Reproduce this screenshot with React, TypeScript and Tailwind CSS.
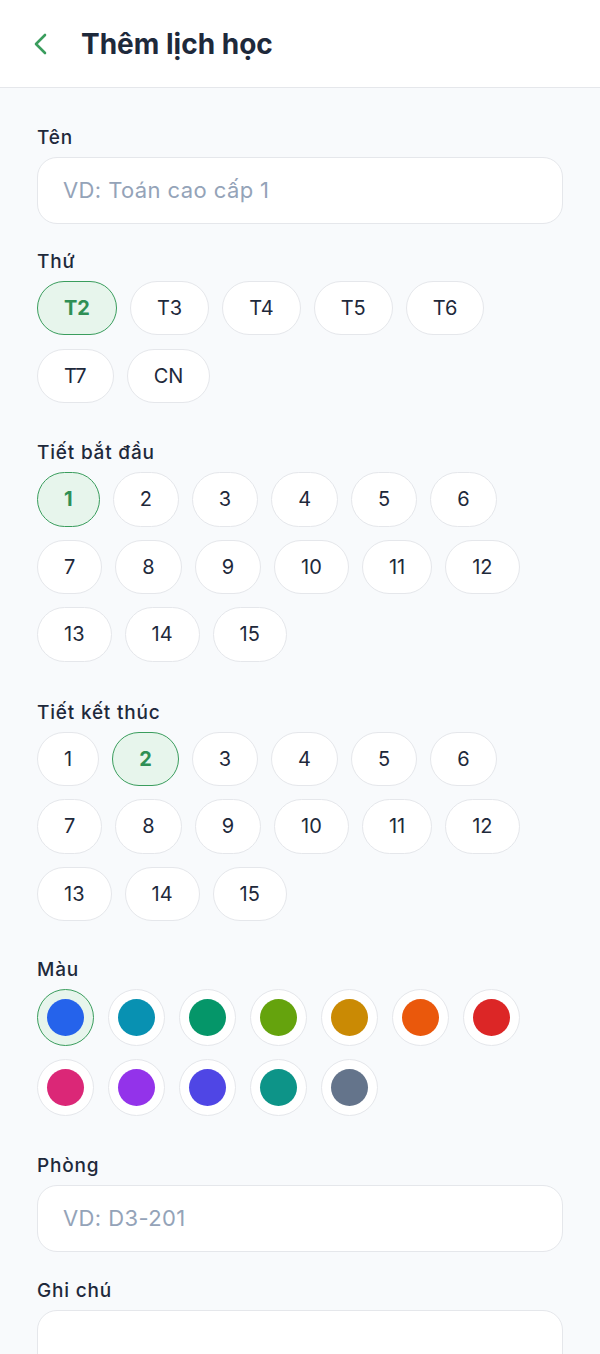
import React from "react";

const days = ["T2", "T3", "T4", "T5", "T6", "T7", "CN"];
const periods = Array.from({ length: 15 }, (_, i) => String(i + 1));
const colors = [
  "#2563eb",
  "#0891b2",
  "#059669",
  "#65a30d",
  "#ca8a04",
  "#ea580c",
  "#dc2626",
  "#db2777",
  "#9333ea",
  "#4f46e5",
  "#0d9488",
  "#64748b",
];

function Chip({ label, selected, tall }: { label: string; selected?: boolean; tall?: boolean }) {
  const h = tall ? "h-[54.5px]" : "h-[54px]";
  return (
    <button
      className={
        selected
          ? `${h} px-[26px] rounded-full border border-[#3a9d5d] bg-[#e7f5ec] text-[20px] font-bold text-[#2f8f55] leading-none`
          : `${h} px-[26px] rounded-full border border-[#e5e7eb] bg-white text-[20px] text-[#1e293b] leading-none`
      }
    >
      {label}
    </button>
  );
}

function Label({ children }: { children: React.ReactNode }) {
  return (
    <div className="text-[19px] leading-[24px] font-medium tracking-[0.8px] text-[#1e293b] mb-[7px]">{children}</div>
  );
}

export default function App() {
  return (
    <div className="min-h-[1354px] bg-[#f8fafc]" style={{ fontFamily: "Inter, 'Noto Sans', sans-serif" }}>
      <div className="h-[88px] bg-white border-b border-[#e5e7eb] flex items-center">
        <div className="w-[81px] flex items-center pl-[33px]">
          <svg width="16" height="22" viewBox="0 0 16 22" fill="none">
            <polyline points="12,2 3,11 12,20" stroke="#3a9d5d" strokeWidth="2.6" strokeLinecap="round" strokeLinejoin="round" />
          </svg>
        </div>
        <h1 className="text-[28px] font-bold text-[#1e293b] leading-none">Thêm lịch học</h1>
      </div>

      <div className="px-[37px] pt-[38px]">
        <Label>Tên</Label>
        <div className="h-[67px] rounded-[20px] border border-[#e5e7eb] bg-white flex items-center px-[25px] text-[22px] tracking-[0.4px] text-[#94a3b8]">
          VD: Toán cao cấp 1
        </div>

        <div className="mt-[26px]">
          <Label>Thứ</Label>
          <div className="flex flex-wrap gap-x-[13px] gap-y-[14px]">
            {days.map((d, i) => (
              <Chip key={d} label={d} selected={i === 0} />
            ))}
          </div>
        </div>

        <div className="mt-[38px]">
          <Label>Tiết bắt đầu</Label>
          <div className="flex flex-wrap gap-x-[13px] gap-y-[13px]">
            {periods.map((p, i) => (
              <Chip key={p} label={p} selected={i === 0} tall />
            ))}
          </div>
        </div>

        <div className="mt-[39px]">
          <Label>Tiết kết thúc</Label>
          <div className="flex flex-wrap gap-x-[13px] gap-y-[13px]">
            {periods.map((p, i) => (
              <Chip key={p} label={p} selected={i === 1} tall />
            ))}
          </div>
        </div>

        <div className="mt-[37px]">
          <Label>Màu</Label>
          <div className="flex flex-wrap gap-x-[14px] gap-y-[13px]">
            {colors.map((c, i) => (
              <div
                key={c}
                className={
                  i === 0
                    ? "w-[57px] h-[57px] rounded-full border border-[#3a9d5d] bg-[#e7f5ec] flex items-center justify-center"
                    : "w-[57px] h-[57px] rounded-full border border-[#e5e7eb] bg-white flex items-center justify-center"
                }
              >
                <div className="w-[37px] h-[37px] rounded-full" style={{ backgroundColor: c }} />
              </div>
            ))}
          </div>
        </div>

        <div className="mt-[38px]">
          <Label>Phòng</Label>
          <div className="h-[67px] rounded-[20px] border border-[#e5e7eb] bg-white flex items-center px-[25px] text-[22px] tracking-[0.4px] text-[#94a3b8]">
            VD: D3-201
          </div>
        </div>

        <div className="mt-[27px]">
          <Label>Ghi chú</Label>
          <div className="h-[120px] rounded-[20px] border border-[#e5e7eb] bg-white" />
        </div>
      </div>
    </div>
  );
}
